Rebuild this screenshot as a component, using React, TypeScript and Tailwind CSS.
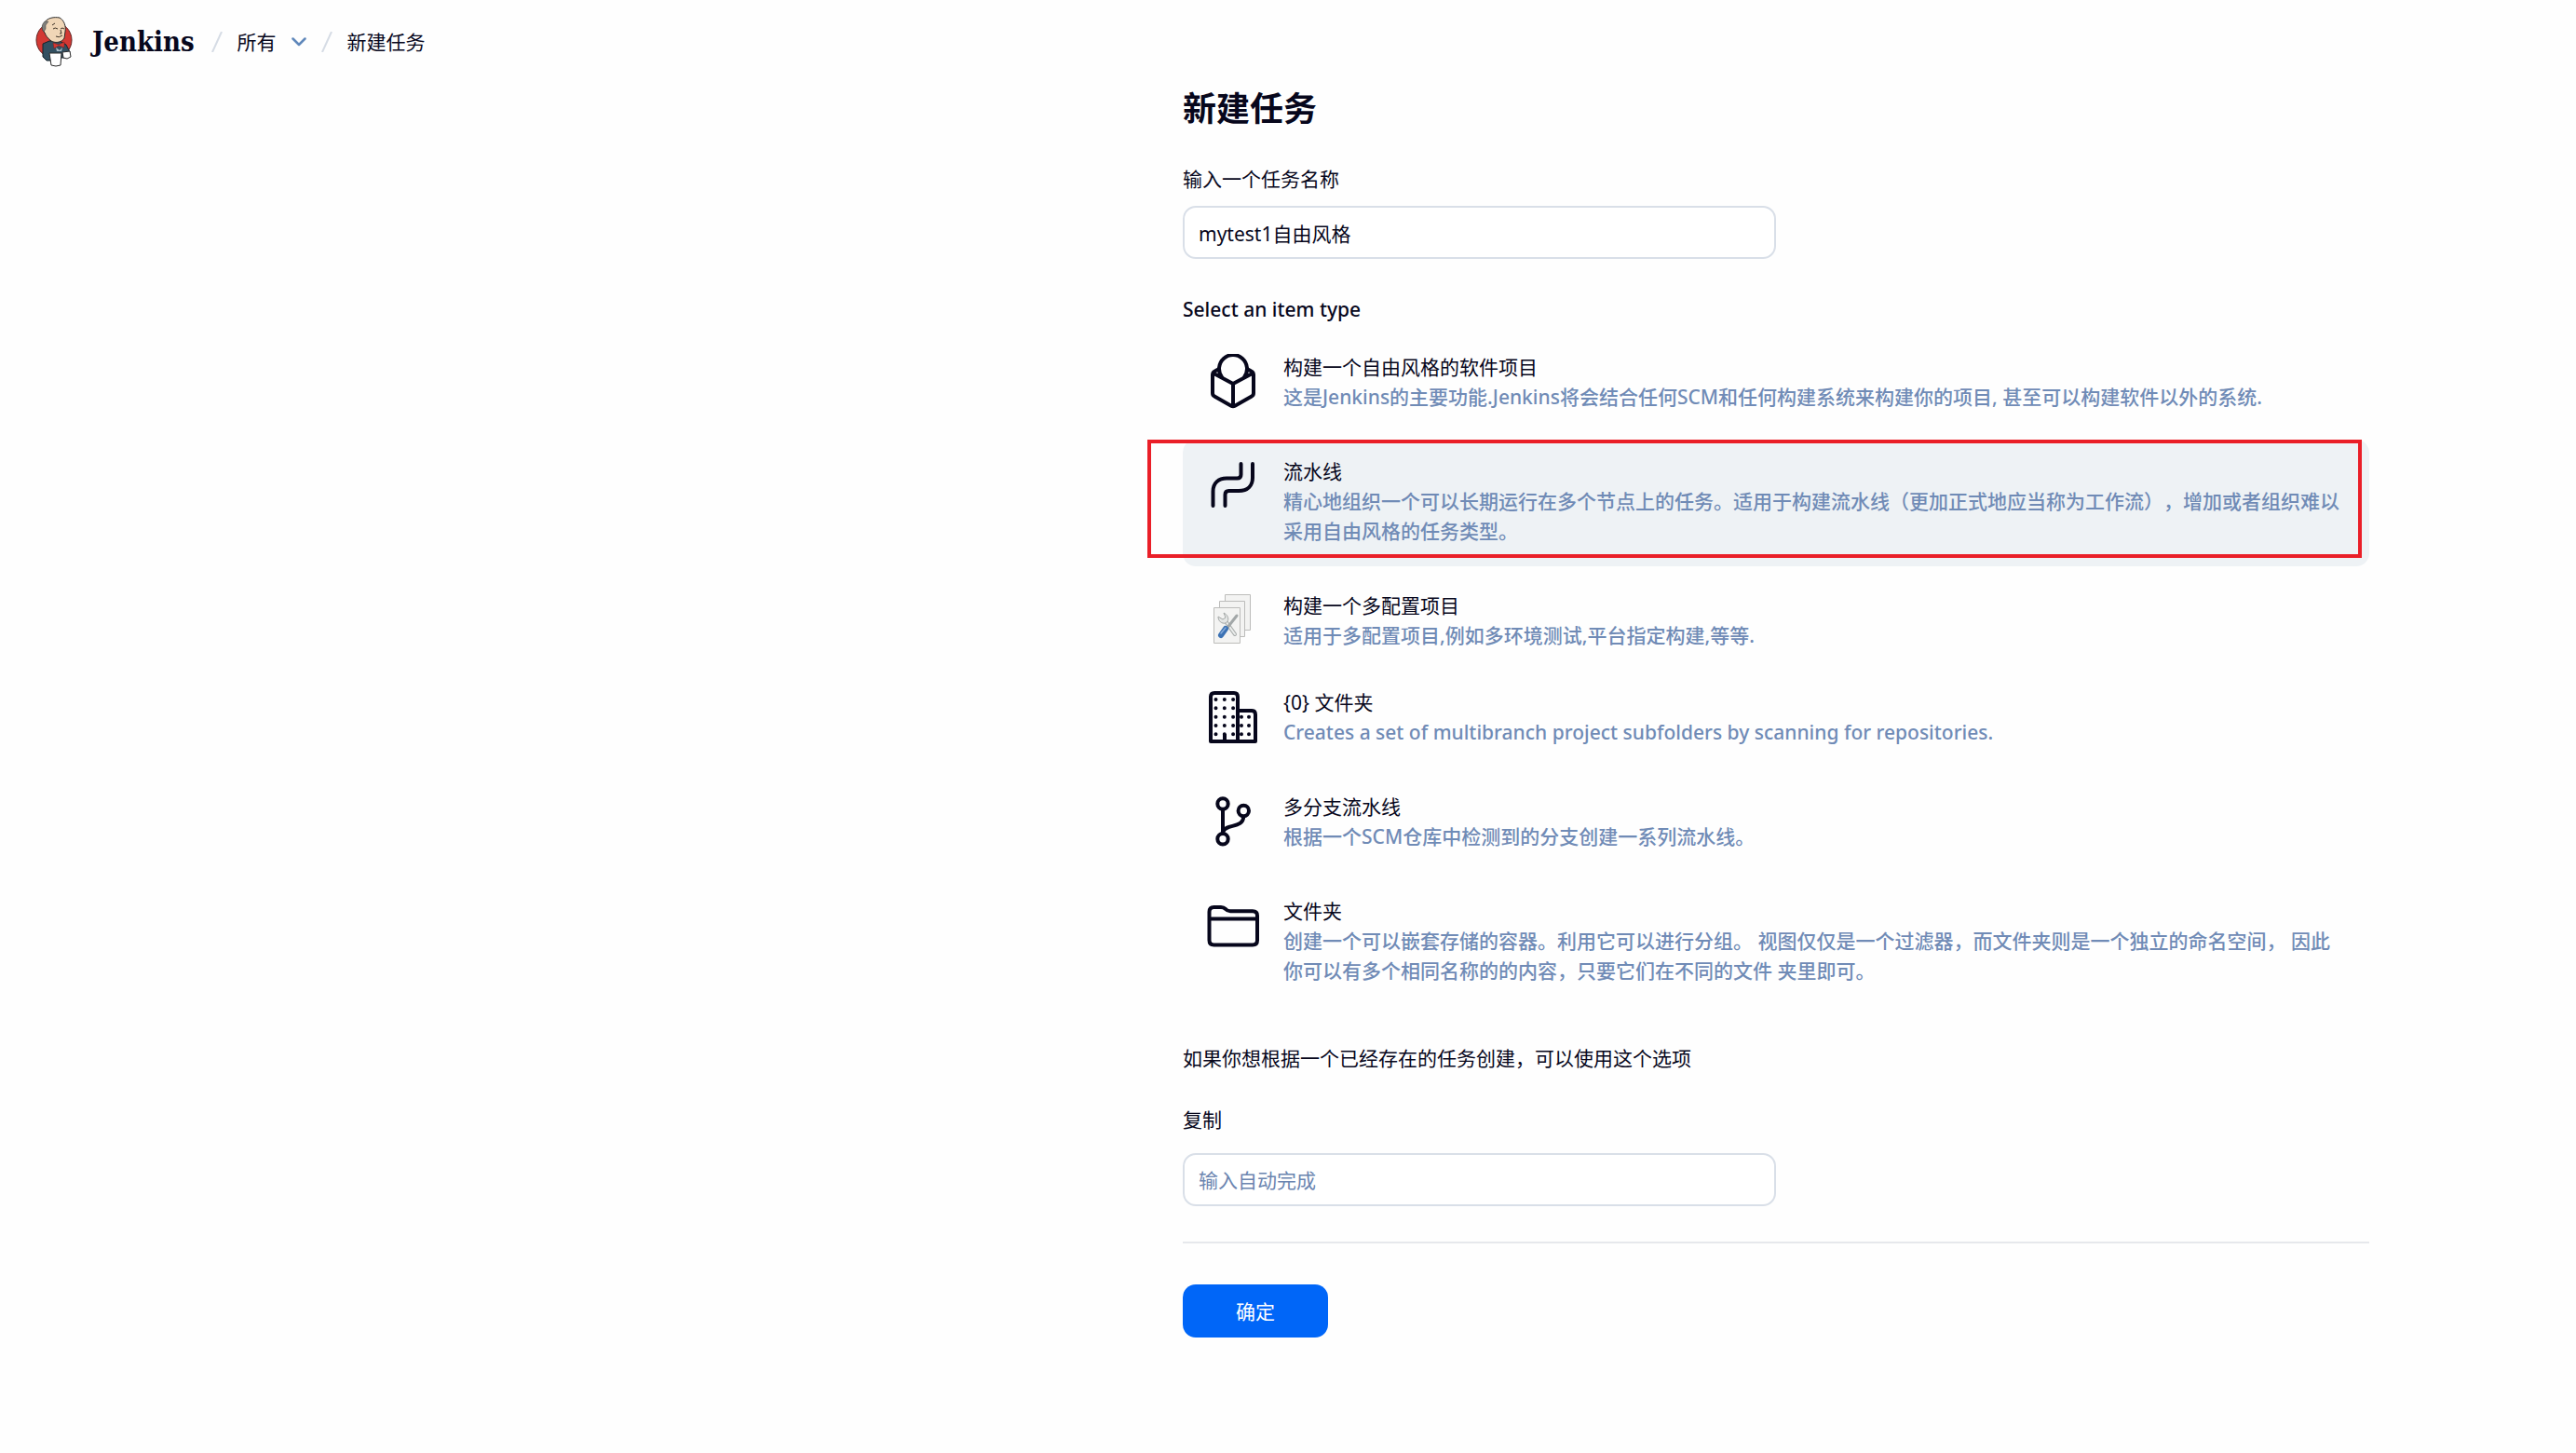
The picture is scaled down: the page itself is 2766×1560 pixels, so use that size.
import { ReactNode, useState } from "react";

interface ItemType {
  id: string;
  name: string;
  description: string;
  icon: ReactNode;
  compact?: boolean;
}

const FreestyleIcon = () => (
  <svg className="h-[60px] w-[60px]" viewBox="0 0 60 60" fill="none" stroke="#07071c" strokeWidth="4" strokeLinecap="round" strokeLinejoin="round" aria-hidden="true">
    <path d="M8.500 20.500L30 32L51.500 20.500M30 32V56M15 16L10.500 18.500Q8 19.800 8 22.500V42Q8 44.500 10 45.500L28 55.700Q30 56.800 32 55.700L50 45.500Q52 44.500 52 42V22.500Q52 19.800 49.500 18.500L45 16" />
    <path d="M18 25A15 15 0 1 1 42 25" />
  </svg>
);

const PipelineIcon = () => (
  <svg className="h-[60px] w-[60px]" viewBox="0 0 60 60" fill="none" stroke="#07071c" strokeWidth="4" strokeLinecap="round" aria-hidden="true">
    <path d="M8.500 51V35.500C8.500 26.500 14.500 21.500 23 21.500H34.500Q38.500 21.500 38.500 17.500V6" />
    <path d="M21.500 51V39Q21.500 35 25.500 35H36C46 35 51 29 51 21V6" />
  </svg>
);

const MatrixIcon = () => (
  <svg className="h-[60px] w-[60px]" viewBox="0 0 60 60" aria-hidden="true">
    <g fill="#f3f3f2" stroke="#bcbcba" strokeWidth="1">
      <path d="M21.500 2.500H48.500V40.500H21.500Z" />
      <path d="M15.500 9.500H42.500V47.500H15.500Z" />
      <path d="M9.500 16.500H37.500V54.500H9.500Z" />
    </g>
    <path d="M22 31L32 45" fill="none" stroke="#a9adac" strokeWidth="4" strokeLinecap="round" />
    <path d="M22 31L32 45" fill="none" stroke="#eceeed" strokeWidth="2" strokeLinecap="round" />
    <path d="M14 26C14 31 18 34 22 33C26 31 26 25 20 22L22 27L19 29Z" fill="#e4e6e5" stroke="#a3a7a6" />
    <path d="M34 25L23 39" stroke="#a2a7a8" strokeWidth="3" strokeLinecap="round" />
    <path d="M22 39L17 46" stroke="#3c72b4" strokeWidth="6" strokeLinecap="round" />
    <path d="M22 38L17 44" stroke="#86abda" strokeWidth="1.500" strokeLinecap="round" />
  </svg>
);

const OrganizationIcon = () => (
  <svg className="h-[60px] w-[60px]" viewBox="0 0 60 60" fill="none" stroke="#07071c" strokeWidth="4" strokeLinejoin="round" aria-hidden="true">
    <path d="M6 56V8Q6 4 10 4H31Q35 4 35 8V56ZM35 23H50Q54 23 54 27V56H35M21 56V48" />
    <path
      d="M11.500 11H31M11.500 20.300H31M11.500 29.700H31M11.500 39H31M11.500 48.300H31M39 29.700H47M39 39H47M39 48.300H47"
      strokeDasharray="0 9.300"
      strokeLinecap="round"
    />
    <path d="M47 29.700H47.010M47 39H47.010M47 48.300H47.010" strokeLinecap="round" />
  </svg>
);

const BranchIcon = () => (
  <svg className="h-[60px] w-[60px]" viewBox="0 0 60 60" fill="none" stroke="#07071c" strokeWidth="4" aria-hidden="true">
    <circle cx="19" cy="11" r="5.700" />
    <circle cx="41.300" cy="18.500" r="5.700" />
    <circle cx="19" cy="48.700" r="5.700" />
    <path d="M19 17V43M41.300 24C41.300 38 22 32 19.500 41" />
  </svg>
);

const FolderIcon = () => (
  <svg className="h-[60px] w-[60px]" viewBox="0 0 60 60" fill="none" stroke="#07071c" strokeWidth="4" strokeLinejoin="round" aria-hidden="true">
    <path d="M4.500 21V15Q4.500 10 9.500 10H17Q20 10 22 12Q24 14.300 27 14.300H51Q56 14.300 56 19V45.500Q56 50.500 51 50.500H9.500Q4.500 50.500 4.500 45.500ZM4.500 22.600H56" />
  </svg>
);

const JenkinsLogo = () => (
  <svg className="h-[54px] w-10" viewBox="0 0 40 54" aria-hidden="true">
    <circle cx="20" cy="25" r="19" fill="#d33833" stroke="#5c1f1e" />
    <path d="M8 29L15 26H26L33 30L37 38L34 44H26L25 47H12L8 43Z" fill="#335061" stroke="#16222b" />
    <path d="M10 6C13 1 20 0 26 1C31 4 33 10 32 16L31 23C29 27 22 29 17 26C13 23 11 20 10 17C7 15 7 9 10 6Z" fill="#f0d6b7" stroke="#2a2a2a" />
    <path d="M10 5C7 8 6 12 9 16L11 13V9L14 5Z" fill="#81807c" stroke="#3a3a3a" strokeWidth="0.500" />
    <path d="M19 13Q21 11 24 13M27 13Q29 11 31 13M27 14L28 18H26M22 21Q25 23 29 20M18 9L21 7" fill="none" stroke="#3b3025" />
    <path d="M19 28L25 30L31 27V33L25 31L20 34Z" fill="#d33833" stroke="#7a1d1b" strokeWidth="0.500" />
    <path d="M22 33L26 36L29 33L28 37H23Z" fill="#a9bcc8" />
    <path d="M15 39H28L27 52Q22 54 17 52ZM29 38L37 37L38 43L34 45L30 44Z" fill="#ffffff" stroke="#2a2a2a" />
  </svg>
);

const Slash = () => (
  <svg className="h-[22px] w-3" viewBox="0 0 12 22" fill="none" stroke="#d6dce5" strokeWidth="2" aria-hidden="true">
    <path d="M11 0L1 22" />
  </svg>
);

const itemTypes: ItemType[] = [
  {
    id: "freestyle",
    name: "构建一个自由风格的软件项目",
    description: "这是Jenkins的主要功能.Jenkins将会结合任何SCM和任何构建系统来构建你的项目, 甚至可以构建软件以外的系统.",
    icon: <FreestyleIcon />,
  },
  {
    id: "pipeline",
    name: "流水线",
    description: "精心地组织一个可以长期运行在多个节点上的任务。适用于构建流水线（更加正式地应当称为工作流），增加或者组织难以采用自由风格的任务类型。",
    icon: <PipelineIcon />,
  },
  {
    id: "matrix",
    name: "构建一个多配置项目",
    description: "适用于多配置项目,例如多环境测试,平台指定构建,等等.",
    icon: <MatrixIcon />,
    compact: true,
  },
  {
    id: "organization",
    name: "{0} 文件夹",
    description: "Creates a set of multibranch project subfolders by scanning for repositories.",
    icon: <OrganizationIcon />,
  },
  {
    id: "multibranch",
    name: "多分支流水线",
    description: "根据一个SCM仓库中检测到的分支创建一系列流水线。",
    icon: <BranchIcon />,
  },
  {
    id: "folder",
    name: "文件夹",
    description: "创建一个可以嵌套存储的容器。利用它可以进行分组。 视图仅仅是一个过滤器，而文件夹则是一个独立的命名空间， 因此你可以有多个相同名称的的内容，只要它们在不同的文件 夹里即可。",
    icon: <FolderIcon />,
  },
];

const inputClass =
  "h-[57px] w-1/2 rounded-[14px] border-2 border-[#d9dfe8] bg-white px-[15px] outline-none placeholder:text-[#6b85b0] placeholder:opacity-100";

const Header = () => (
  <header className="flex h-[90px] items-center px-[38px]">
    <a href="#home" className="flex items-center gap-[21px]">
      <JenkinsLogo />
      <span className="font-['DejaVu_Serif_Condensed','Liberation_Serif',serif] text-[29px] leading-10 font-bold">Jenkins</span>
    </a>
    <nav aria-label="breadcrumb" className="ml-[18px] flex items-center gap-4">
      <Slash />
      <a href="#all">所有</a>
      <button type="button" aria-label="所有" className="flex w-4 items-center">
        <svg className="h-[10px] w-4" viewBox="0 0 16 10" fill="none" stroke="#6088bb" strokeWidth="2.500" strokeLinecap="round" strokeLinejoin="round" aria-hidden="true">
          <path d="M1.500 1.500L8 8L14.500 1.500" />
        </svg>
      </button>
      <Slash />
      <a href="#new">新建任务</a>
    </nav>
  </header>
);

const App = () => {
  const [name, setName] = useState("mytest1自由风格");
  const [copyFrom, setCopyFrom] = useState("");
  const [selected, setSelected] = useState("pipeline");

  return (
    <div className="min-h-screen bg-[#fefefe] font-['Noto_Sans','Noto_Sans_CJK_SC',sans-serif] text-[21px] leading-8 text-[#07071c] [text-spacing-trim:space-all]">
      <Header />
      <main className="grid grid-cols-[1270fr_1274fr_222fr]">
        <form className="col-start-2 pb-16" onSubmit={(e) => e.preventDefault()}>
          <h1 className="text-[36px] leading-[54px] font-bold">新建任务</h1>

          <label htmlFor="name" className="mt-8 block">
            输入一个任务名称
          </label>
          <input id="name" className={`${inputClass} mt-[13px]`} value={name} onChange={(e) => setName(e.target.value)} />

          <fieldset className="mt-[38px]">
            <legend className="block font-medium">Select an item type</legend>
            <div className="mt-3 flex flex-col gap-2">
              {itemTypes.map((item) => (
                <label
                  key={item.id}
                  className={`relative flex gap-6 rounded-[14px] px-6 pt-[18px] ${item.compact ? "pb-[14px]" : "pb-[22px]"} ${
                    selected === item.id ? "bg-[#eef2f5]" : ""
                  }`}
                >
                  <input
                    type="radio"
                    name="mode"
                    className="sr-only"
                    checked={selected === item.id}
                    onChange={() => setSelected(item.id)}
                  />
                  <span className="mt-0.5 shrink-0">{item.icon}</span>
                  <span className="min-w-0">
                    <span className="block">{item.name}</span>
                    <span className="block font-medium text-[#708bb6]">{item.description}</span>
                  </span>
                  {item.id === "pipeline" && (
                    <span className="pointer-events-none absolute top-0 right-2 bottom-[9px] -left-[38px] border-4 border-[#ea1f28]" />
                  )}
                </label>
              ))}
            </div>
          </fieldset>

          <p className="mt-10">如果你想根据一个已经存在的任务创建，可以使用这个选项</p>
          <label htmlFor="from" className="mt-[34px] block">
            复制
          </label>
          <input
            id="from"
            className={`${inputClass} mt-5`}
            placeholder="输入自动完成"
            value={copyFrom}
            onChange={(e) => setCopyFrom(e.target.value)}
          />

          <div className="mt-[38px] border-t-2 border-[#e6e8ec] pt-11">
            <button type="submit" className="h-[57px] w-[156px] rounded-[14px] bg-[#0066f8] text-white">
              确定
            </button>
          </div>
        </form>
      </main>
    </div>
  );
};

export default App;
